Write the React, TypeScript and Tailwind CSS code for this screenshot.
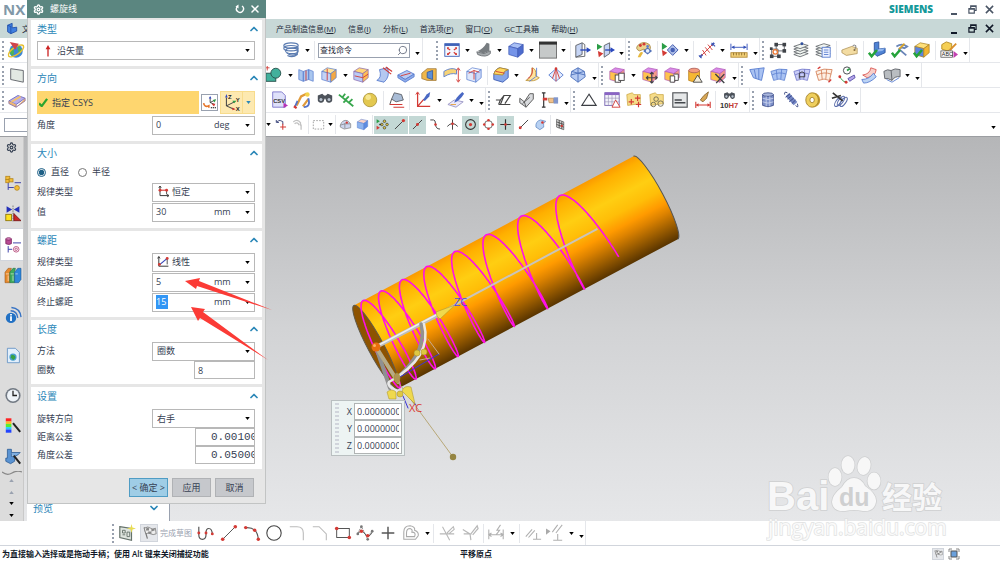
import React, { useState } from 'react';
import { Settings, X, Search, ChevronUp, ChevronDown } from 'lucide-react';

const BLUE = '#5b7fd0';
const RED = '#d33a35';
const GRAY = '#5c6066';

// ---- icon building blocks -------------------------------------------------

const Cube: React.FC<{ top: string; left: string; right: string; line?: string }> = ({ top, left, right, line = BLUE }) => (
  <g stroke={line} strokeWidth="0.8" strokeLinejoin="round">
    <path d="M2 6 L8 2 L18 4 L12 8.500 Z" fill={top} />
    <path d="M2 6 L12 8.500 V18 L2 15 Z" fill={left} />
    <path d="M12 8.500 L18 4 V13 L12 18 Z" fill={right} />
  </g>
);

const PurpleCube = <Cube top="#d98be8" left="#ffc34d" right="#f59a8a" line="#b35fb8" />;

const Dots: React.FC<{ points: number[][]; r?: number; color?: string }> = ({ points, r = 1.6, color = RED }) => (
  <g fill={color}>{points.map(([x, y], i) => <circle key={i} cx={x} cy={y} r={r} />)}</g>
);

const Check = <path d="M1 13 L4 17 L10 10" fill="none" stroke="#25a33a" strokeWidth="2.8" />;

const Layers = (
  <g fill="#f1f5f1" stroke={GRAY} strokeWidth="0.9">
    {[12, 9, 6, 3].map(y => <path key={y} d={`M2 ${y + 3} L11 ${y} L18 ${y + 2} L9 ${y + 5.5} Z`} />)}
  </g>
);

const Binoculars = (
  <g fill="#4c525a">
    <path d="M2 5 L7 3 L9 5 H11 L13 3 L18 5 L18 9 A3.500 3.500 0 0 1 11 10 L10 8 L9 10 A3.500 3.500 0 0 1 2 9 Z" />
    <circle cx="5.500" cy="9.500" r="1.700" fill="#b9c3d0" />
    <circle cx="14.500" cy="9.500" r="1.700" fill="#b9c3d0" />
  </g>
);

const Folder = <path d="M2 4 L8 2 L10 4 H17 V14 L3 16 Z" fill="#f6dc88" stroke="#c9a541" strokeWidth="0.8" />;

const Sheet: React.FC<{ fill?: string; line?: string }> = ({ fill = '#a9c2f2', line = BLUE }) => (
  <g fill="none" stroke={line} strokeWidth="0.9">
    <path d="M1 6 Q10 2 19 4 L16 16 Q10 13 4 16 Z" fill={fill} />
    <path d="M2 10 Q10 6 18 9 M7 4.500 L8 14.500 M13 3.500 L12 14.500" />
  </g>
);

// ---- toolbar icons, all on a 20x20 grid -----------------------------------

const ICONS: Record<string, React.ReactNode> = {
  globe: <><circle cx="10" cy="11" r="7.500" fill="#3f87d9" /><path d="M5 7 Q10 12 6 17 Q1 13 5 7 M12 5 Q18 9 15 14 Q11 12 12 5" fill="#4cb35a" /><ellipse cx="10" cy="11" rx="10" ry="4" fill="none" stroke="#e6c02e" strokeWidth="1.600" transform="rotate(-35 10 11)" /><path d="M3 1 L13 3 L9 10 Z" fill="#d0444a" /></>,
  plane: <path d="M3 3 L17 5 V18 L3 15 Z" fill="#e3e9e3" stroke={GRAY} />,
  bricks: <><path d="M1 11 L11 5 L19 8 L9 15 Z" fill="#b8b0ea" stroke="#6f6ac0" /><path d="M1 11 V14 L9 18 V15 M9 18 L19 11 V8" fill="#f0b872" stroke="#8f75a5" /><path d="M4 12 L14 6" stroke="#f6c26a" strokeWidth="2" /></>,
  spring: <g fill="none" stroke="#5a7bb0" strokeWidth="1.300"><ellipse cx="10" cy="5" rx="8" ry="3" /><ellipse cx="10" cy="8" rx="8" ry="3" /><ellipse cx="11" cy="11" rx="7" ry="3" /><path d="M5 13 Q10 18 17 14 M6 16 Q12 19 17 15 V7" /></g>,
  fit: <><rect x="2" y="3" width="16" height="14" fill="#f5f8ff" stroke="#3e62b8" /><rect x="2" y="3" width="16" height="2.500" fill="#3e62b8" /><path d="M5 8 L8 10 M15 8 L12 10 M5 15 L8 12.500 M15 15 L12 12.500" stroke={RED} strokeWidth="1.400" /><path d="M4.500 7 h2.500 l-2.500 2.500z M15.500 7 v2.500 l-2.500 -2.500z M4.500 15.500 v-2.500 l2.500 2.500z M15.500 15.500 h-2.500 l2.500 -2.500z" fill={RED} /></>,
  clam: <><path d="M3 11 Q9 9 13 2 L16 3 L16 11 L9 14 Z" fill="#777c80" /><path d="M2 12 L10 14 L17 11 V14 Q12 19 3 15 Z" fill="#a6abae" stroke="#6d7276" /></>,
  shaded: <Cube top="#a9c0f5" left="#7594e8" right="#4d6bcd" line="#3f59b5" />,
  window: <><rect x="0.500" y="1" width="19" height="18" fill="#c6c9c9" stroke="#6b6b6b" /><path d="M0 2.500 H20" stroke="#333" strokeWidth="3" /></>,
  boxArrow: <><path d="M2 5 L9 2 V15 L2 18 Z" fill="#c6d5f5" stroke={GRAY} /><path d="M9 2 L12 4 V17 L2 18" fill="none" stroke={GRAY} /><path d="M7 10 H15" stroke="#2a48bd" strokeWidth="1.500" /><path d="M14 7 L19 10 L14 13z" fill="#2a48bd" /></>,
  boxArrow2: <><path d="M8 5 L14 2 V14 L8 18 Z" fill="#c6d5f5" stroke={GRAY} /><path d="M0 3 L6 6.500 L0 10z" fill="#2a9d46" /><path d="M1 11 L7 14 L2 18z" fill={RED} /><path d="M9 10 H16" stroke="#2a48bd" strokeWidth="1.500" /><path d="M15 7 L20 10 L15 13z" fill="#2a48bd" /></>,
  palette: <><path d="M3 5 Q9 -1 16 4 Q19 9 14 12 L10 9 L5 11 Q0 9 3 5" fill="#ecd48f" stroke="#a98a45" /><Dots points={[[6, 5], [10, 3.5]]} /><circle cx="14" cy="6" r="1.500" fill={BLUE} /><path d="M9 11 L14 7 L19 11 L14 15 Z" fill="#5372b8" /><circle cx="14" cy="11" r="2" fill="#e5eefc" /><path d="M3 18 Q6 10 9 13 L6 18z" fill="#e8b93e" /></>,
  orient: <><path d="M1 2 L7 6 L1 10z" fill="#2a9d46" /><path d="M1 10 L7 13 L2 17z" fill={RED} /><path d="M7 10 L13 4 L19 10 L13 16 Z" fill="#aebfe8" stroke="#3d56ad" /><circle cx="13" cy="10" r="2.500" fill="#4560b5" /></>,
  measure: <><path d="M2 18 L5 15 M15 5 L18 2" stroke="#3b55b5" strokeWidth="2" /><path d="M4 16 L16 4 M5 10 L9 16 M8 7 L13 13 M11 4 L16 10" stroke={RED} /><path d="M1 16 l3 3 M15 2 l4 4" stroke="#3b55b5" strokeWidth="1.200" /></>,
  ruler: <><path d="M1 3 V10 M19 3 V10 M2 7 H18" stroke="#3451b9" /><path d="M1.500 7 L5 5 V9z M18.500 7 L15 5 V9z" fill="#3451b9" /><rect x="1" y="13" width="18" height="5" fill="#f4d279" stroke="#b28a38" /><path d="M4 13 V16 M7 13 V16 M10 13 V16 M13 13 V16 M16 13 V16" stroke="#8c6b28" /></>,
  nodes: <><path d="M8 4 H17 V11 H8 Z M3 9 H10 V17 H3 Z" fill="none" stroke={GRAY} /><g fill="#3f4348"><rect x="6" y="2" width="4" height="4" /><rect x="15" y="2" width="4" height="4" /><rect x="15" y="9" width="4" height="4" /><rect x="1" y="7" width="3" height="3" /><rect x="9" y="15" width="4" height="4" /><rect x="1" y="15" width="4" height="4" /></g><circle cx="7" cy="12" r="2.500" fill="none" stroke="#ed7a35" strokeWidth="1.500" /></>,
  layers: <>{Layers}<Dots points={[[11, 3]]} color="#31519f" /></>,
  layerDoc: <>{Layers}<rect x="9" y="7" width="9" height="11" fill="#edf2ff" stroke={BLUE} /><path d="M11 10 H16 M11 12.500 H16 M11 15 H16" stroke={BLUE} /></>,
  tag: <><path d="M1 10 L12 6 L18 8 V14 L6 16 L1 13z" fill="#f3dca2" stroke="#a88c50" strokeWidth="0.800" /><circle cx="15" cy="10" r="1.200" fill="#8b6a35" /><path d="M15 10 Q19 3 13 5" fill="none" stroke="#777" /></>,
  lCheck: <><path d="M7 2 L12 1 V9 L19 8 V13 L10 17 L7 14z" fill="#4f83d4" stroke="#2e559f" /><path d="M12 9 L19 8 L16 11 L9 12z" fill="#8fb5ee" />{Check}</>,
  lBlock: <path d="M4 5 L11 2 V9 L18 8 V14 L9 18 L4 15z M4 5 L9 7 V18" fill="#3f7fe0" stroke="#2050a8" strokeWidth="1.300" />,
  pickCheck: <><path d="M6 6 Q12 2 18 6 L15 8 Q12 6 9 9 L17 16" fill="none" stroke="#6a85b8" strokeWidth="2" /><path d="M9 9 L15 3" stroke="#d9a428" strokeWidth="2" />{Check}</>,
  cubeCheck: <><Cube top="#ffe07a" left="#5c83dd" right="#f2b632" line="#a98127" />{Check}</>,
  abc: <><path d="M2 4 L7 1 L13 3 V9 L8 11 L2 9z" fill="#f5cf55" stroke="#b48a20" /><path d="M11 10 L18 3" stroke="#d98e2c" strokeWidth="2" /><rect x="1" y="11" width="13" height="7" fill="#fff" stroke="#444" strokeWidth="0.800" /><text x="2" y="17" fontSize="6" fontFamily="Liberation Sans, sans-serif" fill="#222">ABC</text><path d="M15 11 L20 15 L15 19z" fill="#c240b0" /></>,

  unite: <><rect x="1" y="8" width="11" height="9" fill="#42b09c" stroke="#274f4a" /><circle cx="12" cy="8" r="5.500" fill="#42b09c" stroke="#274f4a" /><path d="M0 2 H5 M2.500 0 V5" stroke={RED} /></>,
  book: <><path d="M2 4 L7 6 V17 L2 15z M7 6 L13 4 V15 L7 17z M13 4 L18 6 V17 L13 15z" fill="#a9c6ee" stroke={BLUE} strokeWidth="0.800" /><path d="M10 5 V16" stroke={RED} /></>,
  trimBody: <><Cube top="#ffe49a" left="#c3d3f7" right="#f3a843" /><path d="M8 3 V16" stroke={RED} /></>,
  splitBody: <><Cube top="#ffd77a" left="#b9cbf7" right="#ffbe55" line="#8a6ab0" /><path d="M3 11 L12 13 L18 9" stroke={RED} /></>,
  curl: <><path d="M2 16 Q8 13 5 4 L14 2 Q17 12 10 18z" fill="#b4c8f0" stroke={BLUE} /><path d="M9 2 L18 9 M12 1 L19 6" stroke={RED} strokeWidth="1.300" /></>,
  slab: <><path d="M1 10 L11 5 L19 9 L9 15z" fill="#b8cbf5" stroke={BLUE} /><path d="M1 10 V13 L9 18 L19 12 V9 L9 15z" fill="#8facea" stroke={BLUE} /><path d="M4 11 L15 8" stroke={RED} /></>,
  blueBox: <><path d="M2 8 L8 3 H18 V16 H8 L2 14z" fill="#f0b74a" stroke="#987030" strokeWidth="0.800" /><path d="M8 7 L14 5 V15 L8 13z" fill="#5c8fd6" stroke="#385fa0" /></>,
  thicken: <><path d="M1 6 Q9 1 15 4 V9 Q9 7 1 12z" fill="#f6d377" stroke={BLUE} /><path d="M17 3 V17 M15 5 L17 2 L19 5 M15 15 L17 18 L19 15" stroke={RED} /></>,
  shell: <><Cube top="#f7f9ff" left="#dfe7fb" right="#c8d6f7" /><path d="M4 8 L10 5 V15 M10 5 L16 7" stroke={RED} /></>,
  blend: <><path d="M2 9 Q3 4 8 2 L18 4 V13 L12 18 L2 15z" fill="#86a6e8" stroke="#3f5fb5" /><path d="M2 9 Q4 3 9 2 L18 4 Q13 5 12 10z" fill="#ffd860" stroke="#b58b2a" /><path d="M4 6 L14 8" stroke={RED} /></>,
  sweep: <><path d="M9 2 Q14 3 13 11 L17 13 Q12 18 2 16 Q9 14 9 2z" fill="#ffe39a" stroke="#c09a45" /><path d="M14 2 V12 M13 12 L6 17" stroke={BLUE} /><path d="M9 2 Q11 10 4 14" stroke={RED} /></>,
  pyramid: <><path d="M2 10 L10 3 L18 10 L10 17z" fill="#e5edff" stroke={BLUE} /><path d="M10 3 V17 M10 3 L6 14 M10 3 L14 14" stroke={RED} /><circle cx="10" cy="3" r="1.500" fill={RED} /></>,
  polyhedron: <g fill="#b7cbf2" stroke="#4d70bb"><path d="M10 2 L17 6 L18 12 L10 18 L2 12 L3 6z" /><path d="M2 10 L10 8 L18 10 M10 2 V18 M3 6 L10 8 L17 6" fill="none" /></g>,

  faceCopy: <>{PurpleCube}<rect x="8" y="10" width="6" height="8" fill="#fff" stroke="#444" /><rect x="12" y="8" width="6" height="8" fill="#fff" stroke="#444" /></>,
  faceMove: <>{PurpleCube}<path d="M12 7 V19 M6 13 H18 M10 9 L12 7 L14 9 M10 17 L12 19 L14 17 M8 11 L6 13 L8 15 M16 11 L18 13 L16 15" stroke="#3c3f44" strokeWidth="1.200" /></>,
  facePattern: <>{PurpleCube}<path d="M8 11 h5 v7 h-5z M12 9 h5 v7 h-4" fill="#fff" stroke="#444" /></>,
  cylTri: <><path d="M3 5 V16 Q9 19 15 16 V5" fill="#f6b733" stroke="#c28a28" /><ellipse cx="9" cy="5" rx="6" ry="2.500" fill="#f49c80" stroke="#b3625a" /><path d="M13 10 L18 18 H8z" fill="#f4ecd8" stroke="#444" /></>,
  faceDelete: <>{PurpleCube}<path d="M7 9 L17 19 M17 9 L8 19" stroke="#3c3f44" strokeWidth="1.500" /></>,

  surfA: <><path d="M2 4 L18 2 L15 16 L6 13 Z" fill="#a9c2f2" stroke={BLUE} /><path d="M7 4 L9 14 M12 3 L12 15" stroke={BLUE} /></>,
  surfB: <Sheet />,
  surfC: <><Sheet fill="#c9cdf6" line="#7277ca" /><path d="M7 14 V8 Q10 5 13 8 V12 H7" stroke="#333" /></>,
  surfD: <><Sheet fill="#fdf0e4" line="#d37b52" /><path d="M3 3 L6 1 M15 18 L18 15" stroke={RED} strokeWidth="1.500" /></>,
  surfE: <><circle cx="10" cy="5" r="4" fill="#fff" stroke="#3c3f44" /><path d="M10 5 L13 3" stroke="#2a9d46" strokeWidth="2" /><path d="M2 11 Q4 17 9 18" stroke="#2a9d46" /><Dots points={[[2, 12], [9, 18]]} /><path d="M11 14 L18 10 L19 13 L13 17z" fill="#b4a6ea" stroke="#5a50a8" /></>,
  surfF: <><path d="M3 10 Q11 9 12 2 L18 4 Q17 12 8 13z" fill="#f8cfc9" stroke={RED} strokeWidth="0.800" /><path d="M2 15 Q10 15 15 8 L18 12 Q11 19 4 19z" fill="#bcd4f5" stroke={BLUE} /></>,
  surfG: <><path d="M1 6 Q5 3 9 5 Q13 2 19 4 V12 Q13 11 10 16 Q5 13 2 14z" fill="#b9bdc1" stroke={GRAY} /><path d="M9 5 L10 16" stroke={GRAY} /><path d="M4 15 L10 18 L18 13" stroke={BLUE} /></>,

  csv: <><path d="M3 1 H13 L17 5 V18 H3z" fill="#dfe1fa" stroke="#7a74c9" /><text x="3.500" y="13" fontSize="6.500" fontWeight="bold" fontFamily="Liberation Sans, sans-serif" fill="#333">CSV</text><path d="M15 13 L20 16 L15 19z" fill="#b733b7" /></>,
  clip: <><path d="M4 16 L9 6 L15 3 M11 17 L17 9" stroke="#e09a3a" strokeWidth="2.500" /><path d="M2 18 L5 11 M12 18 Q20 18 17 8" stroke="#5573c8" strokeWidth="2" /><path d="M1 17 L4 19" stroke={RED} strokeWidth="2.500" /><circle cx="16" cy="4" r="2.500" fill="#f4d44c" /></>,
  binocular: Binoculars,
  zigzag: <path d="M1 4 L17 17 M5 7 L8 3 M8 10 L12 6 M12 13 L16 9 M6 13 L9 10" stroke="#37a64c" strokeWidth="2" />,
  sphere: <><circle cx="10" cy="10" r="7.500" fill="#e3c850" stroke="#af983f" /><circle cx="8" cy="7" r="3" fill="#f6e690" /></>,
  draft: <><path d="M4 9 L7 2 L15 4 L17 10 L9 12z" fill="#a9bcd6" stroke={GRAY} /><path d="M4 9 L2 15" stroke="#444" /><path d="M2 15 H16 M6 18 H18" stroke={RED} strokeWidth="1.200" /></>,
  csys: <><path d="M4 2 V17 H18 M4 17 L11 9" stroke={RED} strokeWidth="1.400" /><path d="M10 10 L14 4 L18 1 L17 6 L12 11z" fill="#4968c4" /><path d="M2 4 L4 1 L6 4" stroke={RED} /></>,
  brush: <><path d="M1 15 L8 10 L18 12 L10 18z" fill="#ece9fa" stroke="#9a96c5" /><path d="M8 13 Q9 8 17 1 L19 3 Q14 11 8 13z" fill="#4968c4" /><path d="M4 15 H10" stroke="#e5a23d" /></>,

  profile: <path d="M1 10 H6 L4 15 M6 10 L10 5 H17 L11 14 M4 15 H17 M10 5 L6 15" stroke="#444" strokeWidth="1.300" fill="none" />,
  offsetS: <path d="M2 8 L7 12 L13 3 H17 V9 L9 18 L2 13z M5 14 L13 7 M9 18 L7 12" fill="#d8dadd" stroke="#555" />,
  hand: <><path d="M3 2 V18 M1 2 H5 M1 18 H5" stroke="#333" strokeWidth="1.300" /><path d="M2 9 H7" stroke={RED} strokeWidth="3" /><path d="M8 8 H14 V13 H9z" fill="#f1c08a" stroke="#a8763c" strokeWidth="0.700" /><rect x="14" y="7" width="5" height="7" fill="#8297cc" /></>,
  triangle: <path d="M10 3.500 L18 16 H2z" fill="none" stroke="#3c3f44" strokeWidth="1.200" />,
  tableTri: <><rect x="2" y="2" width="16" height="14" fill="#f4f4fb" stroke="#7a67b3" /><path d="M2 3 H18" stroke="#8a63c4" strokeWidth="3" /><path d="M2 8 H18 M2 12 H18 M6 4 V16 M10 4 V16 M14 4 V16" stroke="#9993b5" strokeWidth="0.700" /><path d="M14 10 L19 18 H10z" fill="#fff" stroke={RED} /></>,
  folderPlus: <>{Folder}<path d="M4 12 h6 M7 9 v6 M11 8 h6 M14 5 v6 M12 15 h6 M15 12 v6" stroke={RED} strokeWidth="1.300" /></>,
  folderDots: <>{Folder}<g fill="none" stroke="#6d6a56"><circle cx="9" cy="9" r="2.500" /><circle cx="6" cy="15" r="2.500" /><circle cx="14" cy="14" r="3" /></g></>,
  note: <><rect x="2" y="2" width="16" height="16" fill="#e5e7e8" stroke="#55585c" strokeWidth="1.300" /><path d="M4 10 H12 M4 13 H16" stroke="#44484c" strokeWidth="1.500" /></>,
  dimBrush: <><path d="M7 10 L11 5 L16 1 L14 8 L10 12z" fill="#d9a855" stroke="#8c6a38" /><path d="M2 12 V19 M18 12 V19 M3 15.500 H17" stroke={RED} strokeWidth="1.200" /><path d="M2 15.500 l3 -2 v4z M18 15.500 l-3 -2 v4z" fill={RED} /></>,
  h7: <><g transform="translate(3 -1) scale(0.750)">{Binoculars}</g><text x="0" y="18.500" fontSize="8.500" fontFamily="Liberation Sans, sans-serif" fontWeight="bold" fill="#333">10<tspan fill="#c33a34">H7</tspan></text></>,
  drum: <><path d="M4 4 V16 Q10 19 16 16 V4" fill="#7f92cb" stroke="#46568f" /><ellipse cx="10" cy="4" rx="6" ry="2" fill="#a9b6dd" stroke="#46568f" /><path d="M4 8 Q10 11 16 8 M4 12 Q10 15 16 12 M8 6 V17 M12 6 V17" stroke="#c7d0ec" /></>,
  coil: <><path d="M6 4 L15 14" stroke="#7385c4" strokeWidth="5.500" /><path d="M3 4 Q2 0 6 2 M15 16 Q19 20 17 14 M4 7 L9 3 M6 9 L11 5 M8 12 L13 8 M11 14 L15 10" stroke="#34437f" /></>,
  washer: <><ellipse cx="11" cy="10" rx="7" ry="8" fill="#c49a2d" /><ellipse cx="9" cy="10" rx="7" ry="8" fill="#efcf5d" stroke="#a5832c" /><ellipse cx="9" cy="10" rx="2.500" ry="3" fill="#fff" stroke="#a5832c" /></>,
  coilCut: <><g fill="none" stroke="#5e70ac" strokeWidth="1.200"><ellipse cx="8" cy="12" rx="2.500" ry="6" transform="rotate(35 8 12)" /><ellipse cx="11" cy="11" rx="2.500" ry="6" transform="rotate(35 11 11)" /><ellipse cx="14" cy="12" rx="2.500" ry="6" transform="rotate(35 14 12)" /></g><path d="M2 2 L13 11 M1 8 L11 5" stroke="#333" strokeWidth="1.800" /></>,

  undo: <><path d="M2 7 Q7 1 12 6 L12 10 M2 7 L2 3 M2 7 H6" stroke="#4c5687" strokeWidth="1.600" /><path d="M12 9 V18 M8 14 H17" stroke={RED} strokeWidth="1.600" /></>,
  redo: <path d="M2 6 Q8 1 13 7 V12 M4 9 Q8 5 11 11 M14 10 V18" stroke="#c2c2c2" strokeWidth="2" />,
  marquee: <rect x="2" y="4" width="16" height="13" fill="none" stroke="#8b8b8b" strokeWidth="1.200" strokeDasharray="2.500 2" />,
  solid: <><path d="M2 11 Q5 2 13 4 L18 9 V15 L8 17 L2 14z" fill="#cdd6ee" stroke="#777" /><path d="M9 8 V16 M2 11 L9 9 L17 9" stroke="#777" /><circle cx="12" cy="7" r="1.800" fill={RED} /></>,
  solidBlue: <Cube top="#fbd3c7" left="#8eb4ee" right="#5e8de0" />,
  snapAll: <><path d="M1 2 L6 5 L1 8z" fill="#2a9d46" /><path d="M1 12 L6 15 L1 18z" fill={RED} /><g fill="#e1c83a" stroke="#333"><circle cx="13" cy="5" r="2" /><circle cx="9" cy="10" r="2" /><circle cx="17" cy="10" r="2" /><circle cx="13" cy="15" r="2" /></g><path d="M5 10 H8" stroke="#333" strokeWidth="2" /></>,
  snapEnd: <><path d="M3 17 L16 4" stroke="#444" strokeWidth="1.500" /><Dots points={[[16, 4]]} r={2.5} /></>,
  snapMid: <><path d="M3 17 L17 3" stroke="#444" strokeWidth="1.500" /><Dots points={[[10, 10]]} r={2.3} /></>,
  snapCurve: <><path d="M2 3 H7 Q10 3 10 9 Q10 17 17 17" stroke="#444" strokeWidth="1.500" /><Dots points={[[10, 10]]} r={2} /></>,
  snapInt: <><path d="M2 13 Q10 4 18 13 M10 2 V18" stroke="#444" strokeWidth="1.500" /><Dots points={[[10, 9]]} r={2} /></>,
  snapCenter: <><circle cx="10" cy="10" r="7.500" fill="none" stroke="#333" strokeWidth="1.600" /><Dots points={[[10, 10]]} r={2.5} /></>,
  snapQuad: <><circle cx="10" cy="10" r="6" fill="none" stroke="#555" strokeWidth="1.300" /><Dots points={[[10, 3.5], [10, 16.500], [3.500, 10], [16.500, 10]]} r={2} /></>,
  snapPoint: <><path d="M10 2 V18 M2 10 H18" stroke="#333" strokeWidth="1.800" /><Dots points={[[10, 10]]} r={2} /></>,
  snapOn: <><path d="M3 17 L17 3" stroke="#444" strokeWidth="1.500" /><Dots points={[[5, 15]]} r={2.3} /></>,
  snapFace: <><path d="M3 14 Q2 5 10 3 L18 5 Q13 8 15 14 L9 18z" fill="#b8d1f2" stroke="#4c78bb" /><Dots points={[[13, 7]]} r={2} /></>,
  grid: <><path d="M4 2 L15 6 V18 L4 14z" fill="#ddd" stroke="#444" /><path d="M8 3.500 V15.500 M12 5 V17 M4 6 L15 10 M4 10 L15 14" stroke="#444" strokeWidth="1.300" /><Dots points={[[12, 12]]} r={1.8} /></>,

  sketch: <><path d="M2 3 L15 5 V18 L2 15z" fill="#dfe5df" stroke="#64716a" strokeWidth="1.300" /><path d="M5 7 h3 v3 h-3z M10 9 h3 v5 h-3z M5 12 h3" stroke="#64716a" /><path d="M15 0 L16 4 L20 5 L16 6 L15 10 L14 6 L10 5 L14 4z" fill="#e8dc52" /></>,
  flag: <><path d="M4 3 L8 17" stroke="#777" strokeWidth="1.500" /><path d="M4 4 Q9 1 12 4 T18 4 L19 11 Q15 13 12 11 T6 11z" fill="#ededed" stroke="#777" /><path d="M7 3 l3 1 v3 l-4 0z M13 5 l4 -1 v3 l-4 1z M9 8 l4 0 v3 l-4 0z" fill="#888" /></>,
  line3: <><path d="M2 3 V12 Q2 17 6 17 Q10 17 10 12 V10 Q10 5 13 5 Q17 5 17 12" stroke="#555" strokeWidth="1.300" /><Dots points={[[2, 10], [10, 10], [17, 11]]} /></>,
  line: <><path d="M3 17 L17 3" stroke="#444" /><Dots points={[[3, 17], [17, 3]]} r={2} /></>,
  arc: <><path d="M3 4 Q16 3 17 17" stroke="#555" strokeWidth="1.300" /><Dots points={[[3, 4], [13, 7], [17, 17]]} r={1.900} /></>,
  circle: <circle cx="10" cy="10" r="8" fill="none" stroke="#444" strokeWidth="1.200" />,
  fillet: <path d="M2 3 H10 Q17 3 17 10 V18" stroke="#bbb" strokeWidth="1.200" />,
  chamfer: <path d="M2 3 H9 L17 11 V18" stroke="#bbb" strokeWidth="1.200" />,
  rect: <><rect x="3" y="5" width="14" height="10" fill="none" stroke="#444" /><Dots points={[[3, 5], [17, 15]]} r={2} /></>,
  spline: <><path d="M2 10 L6 3 L12 15 L18 8" stroke="#777" strokeDasharray="2 1" /><path d="M2 11 Q6 5 10 11 T18 9" stroke="#444" /><Dots points={[[6, 8], [13, 13]]} r={2} /><Dots points={[[2, 11], [18, 8], [6, 3], [13, 17]]} r={1.500} color="#777" /></>,
  plus: <path d="M10 3 V17 M3 10 H17" stroke="#555" strokeWidth="1.600" />,
  offset: <g fill="none" stroke="#aaa" strokeWidth="1.200"><path d="M2 17 V9 Q2 2 9 2 Q15 3 14 7 Q19 9 18 13 L15 17z" /><path d="M5 14 V10 Q5 5 9 5 Q12 6 11 9 Q16 9 14 14z" /></g>,
  trim: <path d="M2 11 H18 M5 3 L13 18 M10 10 L17 3 L18 6 L12 11" stroke="#b8b8b8" strokeWidth="1.200" />,
  extend: <path d="M2 6 L10 11 L3 11 M10 11 L11 18 M11 11 L18 2 L19 5 L13 12" stroke="#b8b8b8" strokeWidth="1.300" />,
  quickDim: <path d="M2 6 V17 M18 6 V17 M2 12 H18 M5 10 L2 12 L5 14 M15 10 L18 12 L15 14 M10 12 L14 7 L11 7 L15 1" stroke="#b0b0b0" strokeWidth="1.200" />,
  constraint: <path d="M2 14 L9 6 M5 15 L12 7 M14 10 V17 M10 17 H19" stroke="#b0b0b0" strokeWidth="1.200" />,
  autoCon: <><path d="M0 5 L5 8 L0 12z" fill="#aaa" /><path d="M7 9 L13 1 M11 10 L18 1 M13 11 V18 M8 18 H18" stroke="#b0b0b0" strokeWidth="1.200" /></>,

  navTree: <><path d="M4 9 V18 M4 15 H11 M12 9 H20" stroke="#3a3fa8" strokeWidth="1.200" /><g fill="#f4be38" stroke="#b5851c"><rect x="1" y="1" width="5" height="4" /><rect x="5" y="4" width="5" height="4" /><rect x="1" y="5" width="4" height="4" /><circle cx="15" cy="15.500" r="3" /></g></>,
  assembly: <><path d="M2 1 L9 5 L2 9z M18 1 L11 5 L18 9z" fill="#2430b8" /><path d="M10 0 V20" stroke="#666" strokeDasharray="2 1" /><rect x="1" y="11" width="7" height="8" fill="#ffe21f" stroke="#846b00" /><path d="M11 10 L20 19 H11z" fill="#cb2525" stroke="#701212" /></>,
  partTree: <><path d="M1 3 V9 Q5 11 8 9 V3" fill="#b94a92" stroke="#7b2560" /><ellipse cx="4.500" cy="3" rx="3.500" ry="1.500" fill="#dd86bd" stroke="#7b2560" /><path d="M10 8 H20 M4 12 V20 M4 16 H9" stroke="#3a3fa8" strokeWidth="1.200" /><circle cx="14" cy="16" r="3.500" fill="#fff" stroke="#b0386d" /><circle cx="14" cy="16" r="1.500" fill="none" stroke="#b0386d" /></>,
  books: <g strokeWidth="0.700"><path d="M0 6 L4 1 H8 L6 6 V19 H0z" fill="#e68a2c" stroke="#97551b" /><path d="M6 6 L10 1 H13 L12 6 V19 H6z" fill="#3faa5d" stroke="#1f6b35" /><path d="M12 6 L16 1 H20 V15 L17 19 H12z" fill="#2f87dc" stroke="#1a528e" /><path d="M1 8 H5 M7 8 H11 M13 8 H16 M4 10 V17 M10 10 V17" stroke="#fff" /></g>,
  info: <><circle cx="7.500" cy="13" r="6.500" fill="#2271c4" /><path d="M7.500 11 V17 M7.500 8 V10" stroke="#fff" strokeWidth="2.200" /><path d="M7 4 Q15 4 16 13 M8 0 Q19 1 20 12" stroke="#3672c4" strokeWidth="1.700" /></>,
  webPage: <><path d="M3 1 H13 L18 6 V19 H3z" fill="#e2effc" stroke="#5a8bc0" /><circle cx="10" cy="12" r="4.500" fill="#4a9fd1" /><path d="M8 9 Q13 9 13 13 L10 16 Q9 13 7 13z" fill="#37a142" /></>,
  clock: <><circle cx="10" cy="10" r="9.500" fill="#717983" /><circle cx="10" cy="10" r="7.500" fill="#eef3f8" /><path d="M10 4 V10 H15" stroke="#222" strokeWidth="1.600" /></>,
  rainbow: <><g><rect x="1" y="1" width="7" height="4" fill="#f22" /><rect x="1" y="5" width="7" height="3" fill="#fb2" /><rect x="1" y="8" width="7" height="4" fill="#5e3" /><rect x="1" y="12" width="7" height="3" fill="#2cf" /><rect x="1" y="15" width="7" height="4" fill="#24f" /></g><path d="M10 7 L19 18" stroke="#222" strokeWidth="2.500" /></>,
  machine: <><path d="M3 1 H8 V10 H12 V16 L7 19 L1 16 V12 H3z" fill="#5a93d2" stroke="#2d5d96" /><path d="M8 5 H19 L16 8 L10 11" fill="#7faee0" stroke="#2d5d96" /><path d="M11 9 L19 19" stroke="#222" strokeWidth="2.500" /></>,

  reset: <><path d="M14 4 A7 7 0 1 1 4 6" stroke="currentColor" strokeWidth="2.800" /><path d="M7 1 V9 L1 5z" fill="currentColor" /></>,
  arrowUp: <><path d="M10 4 V19" stroke="#c22" strokeWidth="2.200" /><path d="M10 0 L14 7 H6z" fill="#c22" /></>,
  lawConst: <><path d="M5 1 V16 H19 M3 3 L5 0 L7 3 M17 14 L20 16 L17 18" stroke="#333" strokeWidth="1.600" /><path d="M5 7 H16" stroke={RED} strokeWidth="1.800" /><path d="M16 7 V14" stroke="#333" strokeWidth="1.400" /><Dots points={[[5, 7], [16, 7]]} r={2.4} /></>,
  lawLinear: <><path d="M3 1 V17 H19 M1 4 L3 1 L5 4" stroke="#333" strokeWidth="1.600" /><path d="M5 14 L17 4" stroke="#3546b8" strokeWidth="2" /><path d="M17 4 V14" stroke="#333" strokeWidth="1.400" /><Dots points={[[4, 14], [17, 4]]} r={2.4} /></>,
  csysDlg: <><path d="M11 10 V2 M11 10 L19 6 M11 10 L18 13" stroke="#333" strokeWidth="1.300" /><path d="M9 4 L11 0 L13 4z" fill="#2d45c4" /><path d="M15 6 L20 5 L18 10z" fill="#2a9d46" /><path d="M13 12 L19 12 L17 16z" fill={RED} /><path d="M1 11 Q2 18 9 15 L9 18" stroke="#e6762a" strokeWidth="2.500" /><path d="M12 18 h2 M15 18 h2 M18 18 h2" stroke="#111" strokeWidth="1.600" /></>,
  csysAxes: <><path d="M4 14 V4 M4 14 L14 9 M4 14 L13 18" stroke="#444" strokeWidth="1.200" /><path d="M2.500 4 L4 0 L5.500 4z" fill="#2d45c4" /><path d="M11 8 L16 8 L13 11z" fill="#2a9d46" /><path d="M11 16 L15 18 L11 19z" fill={RED} /><g fontSize="7" fontWeight="bold" fontFamily="Liberation Sans, sans-serif" fill="#222"><text x="6" y="6">Z</text><text x="15" y="9">Y</text><text x="15" y="20">X</text></g></>,
};

const Icon: React.FC<{ name: string; className?: string }> = ({ name, className = 'w-[18px] h-[18px]' }) => (
  <svg viewBox="0 0 20 20" fill="none" className={`shrink-0 overflow-visible ${className}`} aria-hidden="true">{ICONS[name]}</svg>
);

const Caret: React.FC<{ className?: string }> = ({ className = 'text-black' }) => (
  <svg viewBox="0 0 6 4" className={`w-[5px] h-[3px] shrink-0 ${className}`} aria-hidden="true"><path d="M0 0 H6 L3 4z" fill="currentColor" /></svg>
);

// ---- toolbars ---------------------------------------------------------------
// ':' grip   '|' separator   'v' drop-down caret   '.' overflow caret   '*name' pressed tool

const ToolGroup: React.FC<{ tools: string; className?: string; small?: boolean }> = ({ tools, className = '', small }) => (
  <div role="toolbar" className={`flex items-center justify-between shrink-0 h-full ${className}`}>
    {tools.split(' ').map((t, i) => {
      if (t === ':') return <span key={i} className="w-[3px] h-[19px] border-l-2 border-dotted border-gray-400" />;
      if (t === '|') return <span key={i} className="w-px h-[19px] bg-gray-200" />;
      if (t === 'v') return <button key={i} aria-label="More" className="w-[7px] h-full flex items-center justify-center"><Caret /></button>;
      if (t === '.') return <button key={i} aria-label="Toolbar options" className="w-[7px] h-full flex items-end justify-center pb-[7px]"><Caret /></button>;
      const pressed = t.startsWith('*');
      const name = pressed ? t.slice(1) : t;
      return (
        <button key={i} aria-label={name} aria-pressed={pressed} className={`flex items-center justify-center ${small ? 'w-[17px] h-[18px]' : 'w-5 h-5'} ${pressed ? 'bg-[#c3d8d5]' : ''}`}>
          <Icon name={name} className={small ? 'w-[13px] h-[13px]' : 'w-[18px] h-[18px]'} />
        </button>
      );
    })}
  </div>
);

const MENUS = [
  ['产品制造信息', 'M'], ['信息', 'I'], ['分析', 'L'], ['首选项', 'P'], ['窗口', 'O'], ['GC工具箱', ''], ['帮助', 'H'],
];

const WindowButtons: React.FC<{ className?: string }> = ({ className = '' }) => (
  <div className={`flex items-center gap-2 ${className}`}>
    <button aria-label="Minimize" className="w-[9px] h-[10px] flex items-end"><span className="w-[6px] h-[2px] bg-current" /></button>
    <button aria-label="Restore"><svg viewBox="0 0 10 10" className="w-[9px] h-[9px]" fill="none" stroke="currentColor" strokeWidth="1.300"><path d="M3 4 V1 H9 V6 H7 M1 4 H7 V9 H1z M1 4.600 H7 M3 1.600 H9" /></svg></button>
    <button aria-label="Close"><svg viewBox="0 0 10 10" className="w-[9px] h-[9px]" stroke="currentColor" strokeWidth="1.700"><path d="M1 1 L9 9 M9 1 L1 9" /></svg></button>
  </div>
);

const Header: React.FC = () => (
  <header className="shrink-0 bg-white border-b border-[#9c9ea2]">
    <div className="h-[19px] flex items-center justify-between pl-[3px] pr-[6px] text-gray-600">
      <span className="text-[15px] leading-[19px] font-bold text-[#8198a8]">NX</span>
      <div className="flex items-center gap-[18px]">
        <span className="text-[10px] font-extrabold text-[#14999a]">SIEMENS</span>
        <WindowButtons />
      </div>
    </div>
    <nav className="h-[19px] flex items-center bg-[#c8d8d7] pr-[6px]">
      <div className="w-[276px] shrink-0 flex items-center gap-1 pl-[5px]">
        <Icon name="lBlock" className="w-[13px] h-[13px]" />
        <span>文件</span>
      </div>
      <ul className="flex items-center gap-3 grow">
        {MENUS.map(([label, key]) => (
          <li key={label}><button>{label}{key && <>(<u>{key}</u>)</>}</button></li>
        ))}
      </ul>
      <WindowButtons className="text-gray-900" />
    </nav>
    <div className="h-[25px] flex items-center border-b border-gray-200">
      <ToolGroup tools=": globe" className="w-[26px] mr-[252px] pl-[2px]" />
      <ToolGroup tools="spring v |" className="w-[37px] pl-[3px]" />
      <label className="ml-[3px] w-[92px] h-[15px] flex items-center border border-gray-400 px-px">
        <input aria-label="查找命令" defaultValue="查找命令" className="w-full min-w-0 outline-none" />
        <Search className="w-[11px] h-[11px] shrink-0 -scale-x-100 text-gray-500" />
      </label>
      <ToolGroup tools="." className="w-[13px] pl-1 border-r border-gray-200 mr-[13px]" />
      <ToolGroup tools=": fit v clam v shaded v window v | boxArrow boxArrow2 ." className="w-[190px] border-r border-gray-200" />
      <ToolGroup tools=": palette | orient v | measure v ruler ." className="w-[132px] border-r border-gray-200 ml-[2px]" />
      <ToolGroup tools=": nodes layers layerDoc | tag | lCheck pickCheck cubeCheck | abc ." className="w-[208px] border-r border-gray-200 ml-[2px]" />
    </div>
    <div className="h-[25px] flex items-center border-b border-gray-200">
      <ToolGroup tools=": plane" className="w-[27px] mr-[237px] pl-[2px]" />
      <ToolGroup tools="unite v book trimBody v splitBody curl slab blueBox thicken shell | blend v sweep pyramid polyhedron ." className="w-[335px] border-r border-gray-200" />
      <ToolGroup tools=": faceCopy v faceMove facePattern cylTri faceDelete ." className="w-[138px] border-r border-gray-200 ml-[2px]" />
      <ToolGroup tools=": surfA surfB surfC surfD surfE surfF surfG v ." className="w-[181px] border-r border-gray-200 ml-[2px]" />
    </div>
    <div className="h-[25px] flex items-center border-b border-gray-200">
      <ToolGroup tools=": bricks" className="w-[27px] mr-[242px] pl-[2px]" />
      <ToolGroup tools="csv clip binocular zigzag sphere | draft | csys v brush v ." className="w-[217px] border-r border-gray-200" />
      <ToolGroup tools=": profile offsetS hand ." className="w-[83px] border-r border-gray-200 ml-[2px]" />
      <ToolGroup tools=": triangle tableTri folderPlus folderDots note dimBrush | h7 ." className="w-[177px] border-r border-gray-200 ml-[2px]" />
      <ToolGroup tools=": drum coil washer | coilCut ." className="w-[109px] border-r border-gray-200 ml-[2px]" />
    </div>
    <div className="h-[23px] flex items-center">
      <div className="w-[24px] h-[14px] border border-gray-400 ml-1 mr-[237px]" />
      <ToolGroup small tools="v undo redo | marquee v | solid solidBlue | *snapAll *snapEnd *snapMid snapCurve snapInt *snapCenter snapQuad *snapPoint snapOn snapFace | grid" className="w-[304px]" />
      <ToolGroup tools="." className="ml-auto mr-[3px]" />
    </div>
  </header>
);

// ---- dialog -----------------------------------------------------------------

const Section: React.FC<{ title: string; className?: string; children: React.ReactNode }> = ({ title, className = '', children }) => (
  <section className={`bg-white px-[6px] ${className}`}>
    <h2 className="h-[18px] flex items-center justify-between text-[10px] text-[#2b87b8]">
      {title}
      <button type="button" aria-label={`收起${title}`} className="-mr-1"><ChevronUp className="w-3 h-3" strokeWidth={3.5} /></button>
    </h2>
    <div className="pr-px">{children}</div>
  </section>
);

const Field: React.FC<{ label: string; id: string; className?: string; children: React.ReactNode }> = ({ label, id, className = 'h-5', children }) => (
  <div className={`flex items-center justify-between ${className}`}>
    <label htmlFor={id}>{label}</label>
    {children}
  </div>
);

const BOX = 'relative flex items-center h-[19px] border border-[#b8b8b8] bg-white';

const Select: React.FC<{ id: string; value: string; icon?: string; className?: string }> = ({ id, value, icon, className = 'w-[103px]' }) => (
  <div className={`${BOX} ${className} pl-1 gap-[3px]`}>
    {icon && <Icon name={icon} className="w-[12px] h-[12px]" />}
    <select id={id} aria-label={id} className="appearance-none grow min-w-0 outline-none bg-transparent"><option>{value}</option></select>
    <Caret className="mr-1 text-black" />
  </div>
);

const Measure: React.FC<{ id: string; value: string; unit: string; selected?: boolean }> = ({ id, value, unit, selected }) => {
  const [text, setText] = useState(value);
  return (
    <div className={`${BOX} w-[103px] pl-[3px]`}>
      <input id={id} value={text} onChange={e => setText(e.target.value)} className={`min-w-0 outline-none ${selected ? 'w-[12px] bg-[#3296f5] text-white' : 'w-[40px]'}`} />
      <span className="ml-auto w-[31px]">{unit}</span>
      <button type="button" aria-label={`${id} options`} className="mr-1"><Caret /></button>
    </div>
  );
};

const TOLERANCE = "w-[60px] h-[18px] border border-[#b8b8b8] pl-[15px] font-['Liberation_Mono',monospace] text-[11px] outline-none";

const HelixDialog: React.FC = () => {
  const [mode, setMode] = useState('直径');
  return (
    <form onSubmit={e => e.preventDefault()} className="absolute left-[27px] top-0 w-[239px] bg-[#e6e6e6] border border-t-0 border-[#c2c4c4] text-[9px] text-gray-700">
      <div className="h-[18px] bg-[#5b8680] text-white flex items-center pl-[6px] pr-[5px] -mx-px text-[10px]">
        <Settings className="w-[11px] h-[11px] mr-[6px]" strokeWidth={3} />
        <h1 className="grow text-[9px]">螺旋线</h1>
        <button type="button" aria-label="重置" className="mr-1"><Icon name="reset" className="w-[10px] h-[10px]" /></button>
        <button type="button" aria-label="关闭"><X className="w-3 h-3" strokeWidth={3} /></button>
      </div>
      <div className="flex flex-col gap-[3px] px-[3px] pt-[2px]">
        <Section title="类型" className="pb-[6px]">
          <div className="mt-[3px]"><Select id="类型" value="沿矢量" icon="arrowUp" className="w-full" /></div>
        </Section>
        <Section title="方向" className="pb-[5px]">
          <div className="mt-1 flex h-[23px]">
            <div className="w-[162px] flex items-center gap-1 bg-[#fed66f] pl-[2px]">
              <svg viewBox="0 0 10 10" className="w-[9px] h-[9px]"><path d="M0 6 L3 9 L9 1" fill="none" stroke="#2ba52f" strokeWidth="2.500" /></svg>
              指定 CSYS
            </div>
            <button type="button" aria-label="CSYS 对话框" className="mx-[2px] my-[3px] w-[17px] border border-gray-400 bg-white flex items-center justify-center"><Icon name="csysDlg" className="w-[13px] h-[13px]" /></button>
            <button type="button" aria-label="CSYS 类型" className="w-[23px] bg-[#fde9b0] border border-[#f8dc8c] flex items-center justify-center"><Icon name="csysAxes" className="w-[17px] h-[17px]" /></button>
            <button type="button" aria-label="更多 CSYS" className="grow bg-[#fde9b0] border border-l-0 border-[#f8dc8c] flex items-center justify-center"><Caret className="text-[#2b87b8]" /></button>
          </div>
          <Field label="角度" id="角度" className="h-[22px]"><Measure id="角度" value="0" unit="deg" /></Field>
        </Section>
        <Section title="大小" className="pb-[6px]">
          <fieldset className="h-[20px] flex items-center gap-[9px]">
            {['直径', '半径'].map(m => (
              <label key={m} className="flex items-center gap-[5px]">
                <input type="radio" name="size" checked={mode === m} onChange={() => setMode(m)} className="w-[9px] h-[9px] accent-[#1f6187]" />
                {m}
              </label>
            ))}
          </fieldset>
          <Field label="规律类型" id="大小规律"><Select id="大小规律" value="恒定" icon="lawConst" /></Field>
          <Field label="值" id="值"><Measure id="值" value="30" unit="mm" /></Field>
        </Section>
        <Section title="螺距" className="pb-[5px]">
          <div className="mt-[3px]">
            <Field label="规律类型" id="螺距规律"><Select id="螺距规律" value="线性" icon="lawLinear" /></Field>
            <Field label="起始螺距" id="起始螺距"><Measure id="起始螺距" value="5" unit="mm" /></Field>
            <Field label="终止螺距" id="终止螺距"><Measure id="终止螺距" value="15" unit="mm" selected /></Field>
          </div>
        </Section>
        <Section title="长度" className="pb-[5px]">
          <div className="mt-[3px]">
            <Field label="方法" id="方法"><Select id="方法" value="圈数" /></Field>
            <Field label="圈数" id="圈数" className="h-[18px]"><input id="圈数" defaultValue="8" className="w-[61px] h-[18px] border border-[#b8b8b8] px-[3px] outline-none" /></Field>
          </div>
        </Section>
        <Section title="设置" className="pb-[5px]">
          <div className="mt-1">
            <Field label="旋转方向" id="旋转方向" className="h-[19px]"><Select id="旋转方向" value="右手" /></Field>
            <Field label="距离公差" id="距离公差" className="h-[18px]"><input id="距离公差" defaultValue="0.00100" className={TOLERANCE} /></Field>
            <Field label="角度公差" id="角度公差" className="h-[18px]"><input id="角度公差" defaultValue="0.05000" className={TOLERANCE} /></Field>
          </div>
        </Section>
      </div>
      <div className="flex justify-end gap-1 pt-[9px] pb-[6px] pr-[11px]">
        <button type="submit" className="w-[39px] h-[19px] whitespace-nowrap bg-[#9fcde6] border border-[#4f9cc4]">&lt; 确定 &gt;</button>
        <button type="button" className="w-[39px] h-[19px] bg-[#c6c8cc] border border-[#b0b2b5]">应用</button>
        <button type="button" className="w-[39px] h-[19px] bg-[#c6c8cc] border border-[#b0b2b5]">取消</button>
      </div>
    </form>
  );
};

// ---- graphics window ----------------------------------------------------------

// Model space: origin at the base of the cylinder, x along its axis
const RADIUS = 47;
const DEPTH = 8;
const LENGTH = 317;
const SCALE = 3.14;

const helixPath = () => {
  const pts: string[] = [];
  for (let i = 0; i <= 800; i++) {
    const turn = i / 100;
    const a = (48 * Math.PI) / 180 + turn * Math.PI * 2;
    const x = (5 * turn + 0.625 * turn * turn) * SCALE + DEPTH * Math.cos(a);
    pts.push(`${x.toFixed(1)} ${(RADIUS * Math.sin(a)).toFixed(1)}`);
  }
  return `M${pts.join(' L')}`;
};

const Model: React.FC = () => (
  <svg viewBox="24 137 976 384" preserveAspectRatio="xMinYMin meet" className="w-full h-full" role="img" aria-label="螺旋线预览">
    <defs>
      <linearGradient id="body" gradientUnits="userSpaceOnUse" x1="0" y1={-RADIUS} x2="0" y2={RADIUS}>
        <stop offset="0" stopColor="#fb9a00" />
        <stop offset="0.080" stopColor="#ffb000" />
        <stop offset="0.300" stopColor="#ffce12" />
        <stop offset="0.460" stopColor="#ffbe08" />
        <stop offset="0.600" stopColor="#ff9a00" />
        <stop offset="0.700" stopColor="#dc8200" />
        <stop offset="0.850" stopColor="#9a5c00" />
        <stop offset="1" stopColor="#583400" />
      </linearGradient>
    </defs>
    <g transform="translate(376 347) rotate(-28.1)">
      <path d={`M0 ${-RADIUS} H${LENGTH} A${DEPTH} ${RADIUS} 0 0 1 ${LENGTH} ${RADIUS} H0 A${DEPTH} ${RADIUS} 0 0 1 0 ${-RADIUS}`} fill="url(#body)" />
      <path d={`M${LENGTH} ${-RADIUS} A${DEPTH} ${RADIUS} 0 0 1 ${LENGTH} ${RADIUS}`} fill="none" stroke="#555" />
      <ellipse rx={DEPTH} ry={RADIUS} fill="#8d5300" stroke="#5d584c" />
      <path d={helixPath()} fill="none" stroke="#ff10e8" strokeWidth="1.600" />
      <path d="M0 0 H251" stroke="#c9c4bc" strokeWidth="2" />
    </g>
    <g fill="none" strokeLinecap="round">
      <path d="M376 347 L438 315" stroke="#bdbdbd" strokeWidth="4" />
      <path d="M377 346 L438 314" stroke="#eee" strokeWidth="1.500" />
      <path d="M376 347 L390 388" stroke="#8f9090" strokeWidth="4" />
      <path d="M421 324 Q428 350 398 377" stroke="#929292" strokeWidth="3.500" />
      <path d="M424 324 Q433 357 389 382 Q386 386 400 393" stroke="#e8e8e8" strokeWidth="2.500" />
      <path d="M376 347 L398 382" stroke="#b7ab87" strokeWidth="4" />
      <path d="M400 377 L439 354 M403 396 L408 408 M410 398 L416 405" stroke="#3833d8" />
      <path d="M428 339 L439 354 M420 360 L430 358" stroke="#c9aa8e" />
      <path d="M398 382 L453 457" stroke="#b8a878" />
    </g>
    <path d="M436 312 L455 305 L440 319 Q436 317 436 312" fill="#efd94e" stroke="#a78e26" strokeWidth="0.500" />
    <path d="M402 391 Q404 385 411 387 L415 404 Z" fill="#efd94e" stroke="#a78e26" strokeWidth="0.500" />
    <path d="M387 392 Q392 388 396 392 L396 399 H389z" fill="#efd94e" stroke="#a78e26" strokeWidth="0.500" />
    <g fill="#dfc843" stroke="#a78e26" strokeWidth="0.500">
      <circle cx="417" cy="353" r="3" /><circle cx="424" cy="352" r="3" /><circle cx="400" cy="394" r="3" />
      <ellipse cx="397" cy="378" rx="3" ry="5" fill="#ad9553" />
    </g>
    <circle cx="376" cy="347" r="4.500" fill="#e86f0c" />
    <circle cx="374.500" cy="345.500" r="1.500" fill="#ffb060" />
    <circle cx="453" cy="457" r="3.200" fill="#958542" />
    <g fontFamily="Open Sans, sans-serif" fontSize="11">
      <text x="454" y="306" fill="#514bdc">ZC</text>
      <text x="409" y="412" fill="#da3e37">XC</text>
    </g>
  </svg>
);

const Coordinates: React.FC = () => (
  <div className="absolute left-[331px] top-[400px] w-[74px] h-[56px] border border-[#b9bfc0] bg-[#edf4f3] flex pl-[3px] py-[2px] pr-[2px] text-gray-700">
    <span className="w-[4px] border-x-2 border-dotted border-gray-300" />
    <div className="grow flex flex-col">
      {['X', 'Y', 'Z'].map(axis => (
        <label key={axis} className="flex items-center justify-end gap-[2px] h-[17px] text-[9px]">
          {axis}
          <input defaultValue="0.0000000000" className="w-[48px] h-[17px] border border-[#b0b4b4] bg-white px-[2px] outline-none" />
        </label>
      ))}
    </div>
  </div>
);

const SIDE_TABS = [
  ['navTree', 'h-8 mt-[10px]'], ['assembly', 'h-[29px]'], ['partTree', 'h-[33px] bg-white border border-r-0 border-gray-300'],
  ['books', 'h-7'], ['info', 'h-7 mt-3'], ['webPage', 'h-7 mt-3'], ['clock', 'h-7 mt-3'], ['rainbow', 'h-8'], ['machine', 'h-[30px]'],
];

const SideBar: React.FC = () => (
  <aside className="w-[24px] shrink-0 bg-[#dcdcdc] border-r border-[#c9c9c9] flex flex-col">
    <button aria-label="资源条选项" className="h-5 flex items-center justify-center"><Settings className="w-[11px] h-[11px] text-gray-700" strokeWidth={2.5} /></button>
    {SIDE_TABS.map(([name, cls]) => (
      <button key={name} aria-label={name} className={`flex items-center justify-center pl-[2px] ${cls}`}><Icon name={name} className="w-[16px] h-[17px]" /></button>
    ))}
    <svg viewBox="0 0 20 4" className="w-5 h-1 ml-[2px]"><path d="M0 1 Q5 5 10 2 T20 1" fill="none" stroke="#888" strokeWidth="1.200" /></svg>
    <div className="grow flex flex-col items-center justify-around">
      <Caret className="rotate-180 text-gray-400" />
      <Caret className="rotate-180 text-gray-400" />
      <Caret />
      <Caret />
    </div>
  </aside>
);

const Watermark: React.FC = () => (
  <svg viewBox="0 0 184 92" className="absolute right-[50px] bottom-[16px] w-[184px] h-[92px] pointer-events-none opacity-90" aria-hidden="true">
    <g fill="#fafafa" stroke="#cdcecf" strokeWidth="1.500" paintOrder="stroke">
      <ellipse cx="69" cy="23" rx="6.500" ry="9" /><ellipse cx="82" cy="11" rx="6.500" ry="9" />
      <ellipse cx="98" cy="12" rx="6.500" ry="9" transform="rotate(12 98 12)" /><ellipse cx="108" cy="27" rx="6.500" ry="8.500" />
      <path d="M88 24 Q95 24 99 32 Q111 40 110 48 Q108 58 97 57 Q88 55 79 57 Q67 58 66 48 Q66 41 76 33 Q81 24 88 24" />
      <text x="1" y="56" fontFamily="Liberation Sans, sans-serif" fontWeight="bold" fontSize="40">Bai</text>
      <text x="73" y="52" fontFamily="Liberation Sans, sans-serif" fontWeight="bold" fontSize="25" fill="#cdcecf" stroke="none">du</text>
      <text x="116" y="54" fontFamily="Noto Sans CJK SC, sans-serif" fontWeight="bold" fontSize="30">经验</text>
      <text x="2" y="81" fontFamily="Open Sans, sans-serif" fontSize="21" stroke="#dedfe0">jingyan.baidu.com</text>
    </g>
  </svg>
);

const Arrows: React.FC = () => (
  <svg viewBox="0 0 280 370" className="absolute left-0 top-0 w-[280px] h-[370px] pointer-events-none" aria-hidden="true">
    <g fill="#fb3b36">
      <path d="M185 281 L200 278 L199 281 L272 310 L197 286 L196 289z" />
      <path d="M191 307 L205 309 L203 312 L268 360 L200 318 L198 321z" />
    </g>
  </svg>
);

const App: React.FC = () => (
  <div className="relative h-screen flex flex-col overflow-hidden bg-white text-[8px] text-gray-800 font-['Open_Sans','Noto_Sans_CJK_SC',sans-serif]">
    <Header />

    <main className="grow min-h-0 flex">
      <SideBar />
      <div className="grow min-w-0 bg-linear-to-b from-[#b5b6b8] via-[#d2d3d5] to-[#e6e7e9]">
        <Model />
      </div>
    </main>

    {/* Sketch toolbar */}
    <div className="h-[25px] shrink-0 flex items-center pl-[112px] border-b border-gray-300">
      <ToolGroup tools=": sketch" className="w-[25px]" />
      <button disabled className="ml-[3px] flex items-center gap-[2px] text-gray-400">
        <span className="bg-gray-200 border border-gray-300"><Icon name="flag" className="w-4 h-4" /></span>
        完成草图
      </button>
      <ToolGroup tools="line3 line arc circle fillet chamfer rect spline plus offset v | trim extend | quickDim v | constraint autoCon v ." className="w-[390px] ml-1 border-r border-gray-200" />
    </div>

    {/* Status bar */}
    <footer className="h-[16px] shrink-0 flex items-center justify-between pl-[2px] pr-[40px] font-semibold text-gray-900">
      <span className="w-[458px]">为直接输入选择或是拖动手柄；使用 Alt 键来关闭捕捉功能</span>
      <span className="grow">平移原点</span>
      <div className="flex gap-1">
        <span className="bg-gray-200 border border-gray-300"><Icon name="flag" className="w-[10px] h-[10px]" /></span>
        <button aria-label="全屏"><svg viewBox="0 0 12 12" className="w-3 h-3" fill="none" stroke="#888"><path d="M1 4 V1 H4 M8 1 H11 V4 M11 8 V11 H8 M4 11 H1 V8" /><rect x="3" y="3" width="6" height="6" fill="#6aa0dc" stroke="#555" /></svg></button>
      </div>
    </footer>

    {/* Collapsed preview panel peeking out below the dialog */}
    <div className="absolute left-[27px] bottom-[41px] w-[143px] h-[26px] bg-white border-r border-gray-400 pl-[6px] pr-[9px] flex items-center justify-between text-[10px] text-[#2b87b8]">
      预览
      <ChevronDown className="w-3 h-3" strokeWidth={3.5} />
    </div>
    <HelixDialog />
    <Coordinates />
    <Watermark />
    <Arrows />
  </div>
);

export default App;
